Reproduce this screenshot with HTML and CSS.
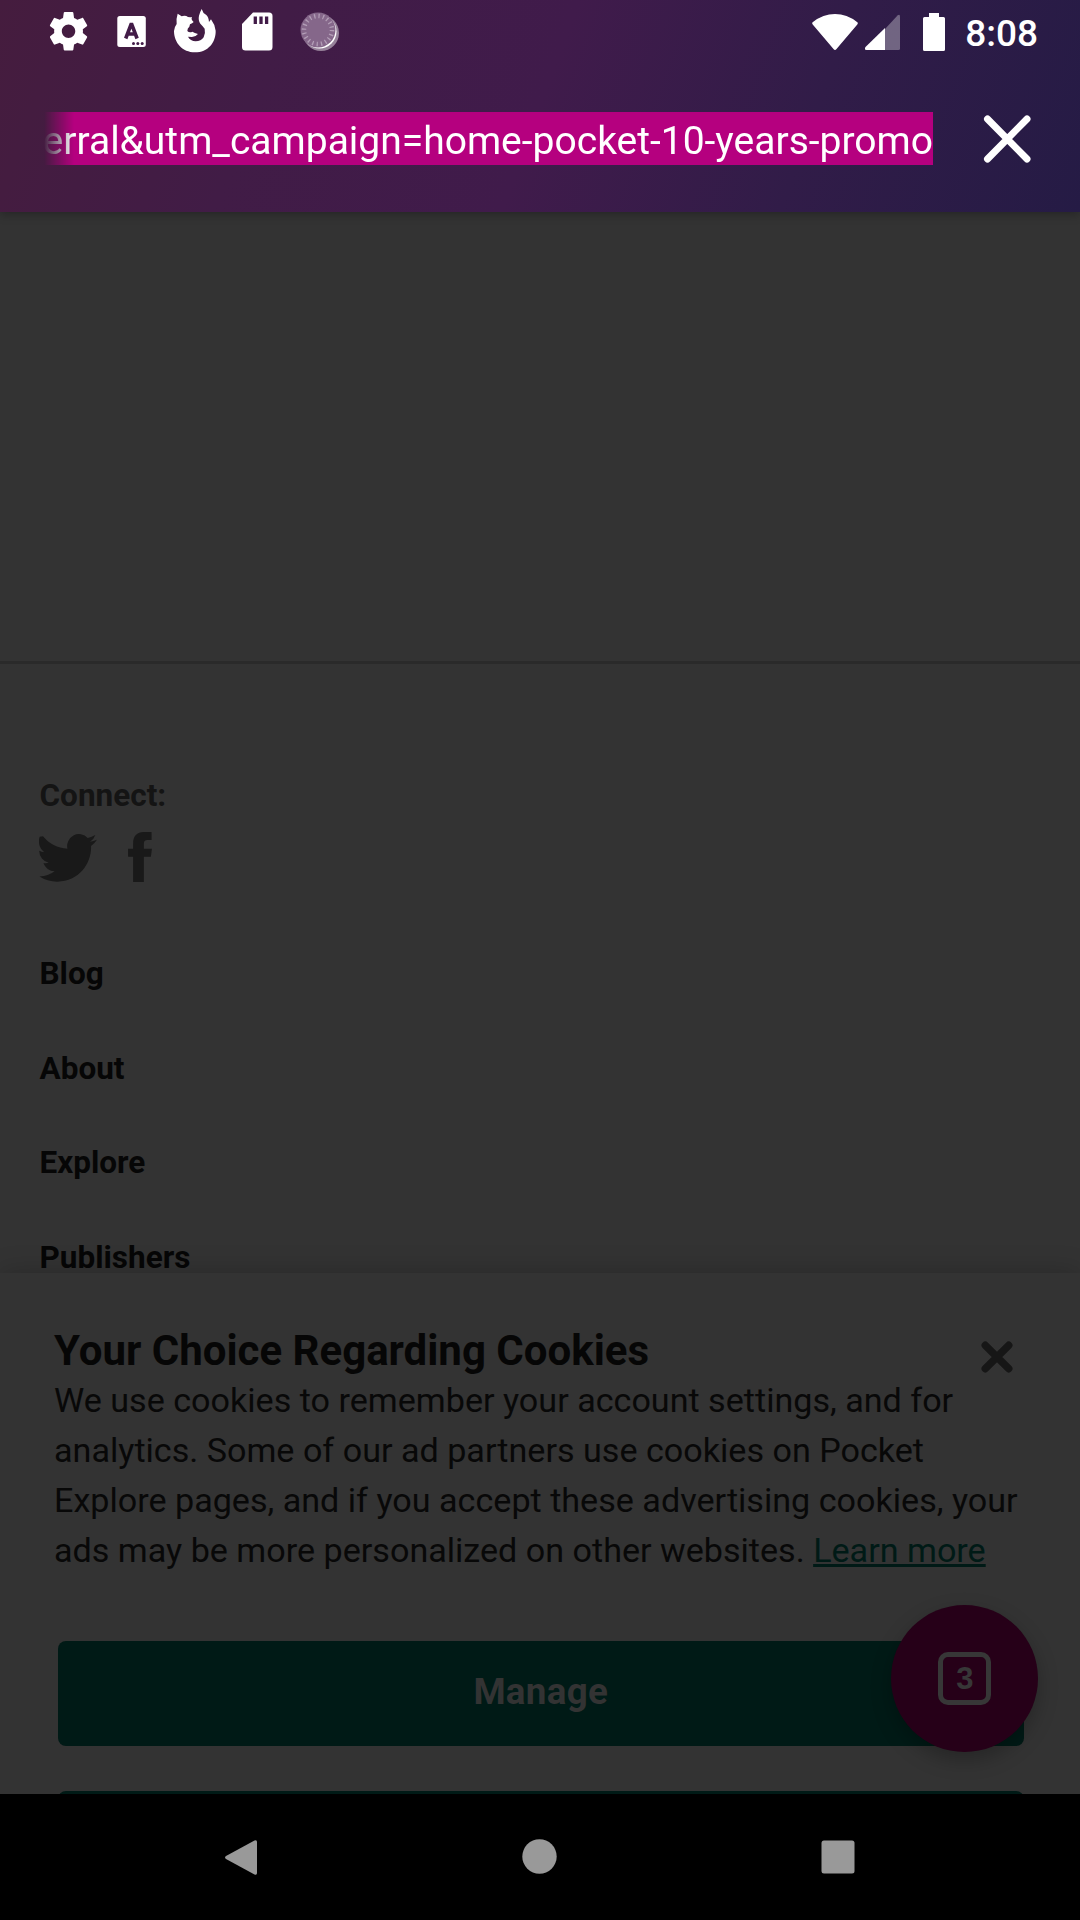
FILE: index.html
```html
<!DOCTYPE html>
<html lang="en">
<head>
<meta charset="utf-8">
<title>Pocket</title>
<link rel="stylesheet" href="styles.css">
</head>
<body>
<div class="screen">
  <header class="toolbar">
    <div class="status">
      <div class="notifications">
        <svg class="slot" viewBox="0 0 63 63"><path transform="translate(8.5 8.2) scale(1.92)" fill="#fff" d="M19.43 12.98c.04-.32.07-.64.07-.98s-.03-.66-.07-.98l2.11-1.65c.19-.15.24-.42.12-.64l-2-3.46c-.12-.22-.39-.3-.61-.22l-2.49 1c-.52-.4-1.08-.73-1.69-.98l-.38-2.65C14.46 2.18 14.25 2 14 2h-4c-.25 0-.46.18-.49.42l-.38 2.65c-.61.25-1.17.59-1.69.98l-2.49-1c-.23-.09-.49 0-.61.22l-2 3.46c-.13.22-.07.49.12.64l2.11 1.65c-.04.32-.07.65-.07.98s.03.66.07.98l-2.11 1.65c-.19.15-.24.42-.12.64l2 3.46c.12.22.39.3.61.22l2.49-1c.52.4 1.08.73 1.69.98l.38 2.65c.03.24.24.42.49.42h4c.25 0 .46-.18.49-.42l.38-2.65c.61-.25 1.17-.59 1.69-.98l2.49 1c.23.09.49 0 .61-.22l2-3.46c.12-.22.07-.49-.12-.64l-2.11-1.65zM12 15.5c-1.93 0-3.5-1.57-3.5-3.5s1.57-3.5 3.5-3.5 3.5 1.57 3.5 3.5-1.57 3.5-3.5 3.5z"/></svg>
        <svg class="slot" viewBox="100 0 63 63"><rect x="117.300" y="16" width="28.500" height="31" rx="2.500" fill="#fff"/><path fill="none" stroke="#421b47" stroke-width="3.600" d="M125.700 38.500L131 24.500h.8l5.300 14M127.500 34h8"/><g fill="#421b47"><circle cx="133.500" cy="43.500" r="1.500"/><circle cx="137.800" cy="43.500" r="1.500"/><circle cx="142.200" cy="43.500" r="1.500"/></g></svg>
        <svg class="slot" viewBox="163 0 63 63"><path transform="translate(30 0) scale(.33333)" fill="#fff" d="M443 41L455 49Q461 46 469 48Q475 53 486 51Q482 59 491 66Q487 70 480 73L478 80Q472 84 472 93Q478 99 487 95Q494 99 504 102Q498 110 486 111L474 110Q481 123 497 124Q513 124 521 112Q527 100 524 86Q518 78 511 71Q504 61 507 47Q510 36 515 27Q518 39 529 45Q536 51 537 66L543 58Q555 74 557 92C558 127 534 157 495 157C457 157 432 128 432 93Q433 81 440 72Q438 56 443 41Z"/></svg>
        <svg class="slot" viewBox="226 0 63 63"><path fill="#fff" d="M253 12.500h16a3.500 3.500 0 0 1 3.500 3.500v31a3.500 3.500 0 0 1-3.500 3.500h-23.500a3.500 3.500 0 0 1-3.500-3.500V24z"/><path stroke="#411b48" stroke-width="3.300" d="M255.300 16.500v7.500M261 16.500v7.500M266.600 16.500v7.500"/></svg>
        <svg class="slot" viewBox="289 0 63 63"><circle cx="321" cy="33" r="18" fill="#fff" opacity=".45"/><circle cx="319.500" cy="31.500" r="17" fill="#fff"/><circle cx="318" cy="30" r="17.500" fill="#85678a"/><circle cx="318" cy="30" r="14" fill="none" stroke="#b29db6" stroke-width="4.500" stroke-dasharray="1.300 3.100"/></svg>
      </div>
      <div class="system">
        <svg class="wifi" viewBox="812 13 46 36"><path fill="#fff" d="M813 21Q823 13 835 13T857 21q1.500 1 .3 2.500L836.500 48q-1.500 1.800-3 0L812.700 23.500q-1.200-1.500.3-2.500z"/></svg>
        <svg class="signal" viewBox="865 14 35 36"><path fill="#fff" opacity=".32" d="M885 29L897.500 15.500q2.500-2 2.500 1V48.500q0 1.500-1.500 1.500H885z"/><path fill="#fff" d="M885 28v22h-18.500q-3-.5-1-3z"/></svg>
        <svg class="battery" viewBox="923 12 22 38"><path fill="#fff" d="M929 12h10v4h4.500q1.500 0 1.500 1.500v31q0 1.500-1.500 1.500h-19q-1.500 0-1.500-1.500v-31q0-1.500 1.500-1.500h4.500z"/></svg>
        <span class="clock">8:08</span>
      </div>
    </div>
    <div class="address">
      <div class="url"><span class="url-text">erral&amp;utm_campaign=home-pocket-10-years-promo</span></div>
      <svg class="clear" viewBox="0 0 48 48"><path stroke="#fff" stroke-width="7" stroke-linecap="round" d="M4.500 4L44 44M44 4L4.500 44"/></svg>
    </div>
  </header>

  <main class="page">
    <div class="blank"></div>
    <footer class="footer">
      <h2 class="connect">Connect:</h2>
      <div class="social">
        <svg class="twitter" viewBox="0 2.2 24 19.700" preserveAspectRatio="none"><path fill="#191919" d="M23.953 4.570a10 10 0 01-2.825.775 4.958 4.958 0 002.163-2.723c-.951.555-2.005.959-3.127 1.184a4.920 4.920 0 00-8.384 4.482C7.690 8.095 4.067 6.130 1.640 3.162L.3 3.300a4.822 4.822 0 00-.3 2.337c0 1.710 1.100 3.213 2.188 4.096A4.904 4.904 0 01.1 9.117v.06a4.923 4.923 0 003.946 4.827 4.996 4.996 0 01-2.212.085 4.936 4.936 0 004.604 3.417 9.867 9.867 0 01-6.102 2.105L0 19.544a13.995 13.995 0 007.557 2.209c9.053 0 13.998-7.496 13.998-13.985 0-.210 0-.420-.015-.630A9.935 9.935 0 0024 4.590z"/></svg>
        <svg class="facebook" viewBox="386 576 71 149"><path fill="#191919" d="M401 725V650H386V626H401V610C401 588 412 576 433 576H456V600H444C436 600 433 603 433 612V626H457L454 650H433V725Z"/></svg>
      </div>
      <nav class="links">
        <a>Blog</a>
        <a>About</a>
        <a>Explore</a>
        <a>Publishers</a>
      </nav>
    </footer>

    <section class="cookies">
      <div class="cookies-head">
        <h1 class="cookies-title">Your Choice Regarding Cookies</h1>
        <svg class="dismiss" viewBox="0 0 32 32"><path stroke="#161616" stroke-width="7.500" stroke-linecap="round" d="M4.300 4.300L27.700 27.700M27.700 4.300L4.300 27.700"/></svg>
      </div>
      <p class="cookies-text">We use cookies to remember your account settings, and for<br>analytics. Some of our ad partners use cookies on Pocket<br>Explore pages, and if you accept these advertising cookies, your<br>ads may be more personalized on other websites. <a class="learn">Learn more</a></p>
      <div class="actions">
        <div class="button">Manage</div>
        <div class="button outline"></div>
      </div>
    </section>

    <div class="fab"><span class="tabs">3</span></div>
  </main>

  <nav class="navbar">
    <svg class="nav-icon" viewBox="0 0 36 36"><path fill="#999" d="M2 17L30.500 1.500q2.500-1 2.500 1.500v31q0 2.500-2.500 1.500L2 20q-2-1.500 0-3z"/></svg>
    <svg class="nav-icon" viewBox="0 0 36 36"><circle cx="17.500" cy="17.500" r="17.200" fill="#999"/></svg>
    <svg class="nav-icon" viewBox="0 0 36 36"><rect x="1.500" y="1.500" width="33" height="33" rx="2.500" fill="#999"/></svg>
  </nav>
</div>
</body>
</html>
```
FILE: styles.css
```css
* {
  box-sizing: border-box;
}

body {
  margin: 0;
  background: #000;
  font-family: Roboto, sans-serif;
}

svg {
  display: block;
  flex: none;
}

.screen {
  display: flex;
  flex-direction: column;
  width: 1080px;
  height: 1920px;
  overflow: hidden;
}

/* Private-mode toolbar */
.toolbar {
  position: relative;
  z-index: 1;
  flex: none;
  height: 212px;
  background: linear-gradient(110deg, #451c3e 0%, #411c46 25%, #401b4b 50%, #311c48 74%, #251b45 100%);
  box-shadow: 0 2px 10px rgba(0, 0, 0, 0.3);
}

.status {
  display: flex;
  justify-content: space-between;
  height: 63px;
  padding: 0 42px 0 37px;
}

.notifications {
  display: flex;
}

.slot {
  width: 63px;
  height: 63px;
}

.system {
  display: flex;
  align-items: center;
}

.wifi {
  width: 46px;
  height: 36px;
  margin-right: 7px;
}

.signal {
  width: 35px;
  height: 36px;
  margin-right: 23px;
}

.battery {
  width: 22px;
  height: 38px;
  margin-right: 20px;
}

.clock {
  color: #fff;
  font-size: 37px;
  font-weight: 500;
  line-height: 43px;
  padding-top: 3px;
}

.address {
  display: flex;
  align-items: center;
  justify-content: space-between;
  height: 151px;
  padding: 0 49.5px 0 44px;
}

.url {
  display: flex;
  width: 889px;
  height: 53px;
  justify-content: flex-end;
  background: #b5007f;
  -webkit-mask-image: linear-gradient(90deg, transparent 0, #000 30px);
  mask-image: linear-gradient(90deg, transparent 0, #000 30px);
}

.url-text {
  color: #fff;
  font-size: 39px;
  line-height: 53px;
  padding-top: 3px;
  white-space: nowrap;
}

.clear {
  width: 48px;
  height: 48px;
}

/* Dimmed page */
.page {
  position: relative;
  flex: 1;
  overflow: hidden;
  background: #333;
}

.blank {
  height: 452px;
  border-bottom: 3px solid #2a2a2a;
}

.footer {
  padding: 114px 39.5px 0;
}

.connect {
  margin: 0;
  color: #141414;
  font-size: 31.5px;
  font-weight: 700;
  line-height: 36px;
}

.social {
  display: flex;
  align-items: flex-end;
  gap: 31px;
  height: 51px;
  margin: 17px 0 74px -0.5px;
}

.twitter {
  width: 58px;
  height: 48px;
}

.facebook {
  width: 24px;
  height: 50px;
}

.links {
  display: flex;
  flex-direction: column;
  gap: 58.5px;
}

.links a {
  color: #060606;
  font-size: 31.5px;
  font-weight: 700;
  line-height: 36px;
}

/* Cookie notice over the page */
.cookies {
  position: absolute;
  left: 0;
  right: 0;
  bottom: 0;
  height: 521px;
  padding: 52.5px 54px 0;
  background: #333;
  box-shadow: 0 0 26px rgba(0, 0, 0, 0.22);
}

.cookies-head {
  display: flex;
  justify-content: space-between;
  height: 49px;
  padding-right: 12.7px;
}

.cookies-title {
  margin: 0;
  color: #060606;
  font-size: 42px;
  font-weight: 700;
  line-height: 50px;
}

.dismiss {
  width: 32px;
  height: 32px;
  margin-top: 15.7px;
}

.cookies-text {
  margin: 0 0 66px;
  color: #080808;
  font-size: 34.125px;
  line-height: 50px;
  white-space: nowrap;
}

.learn {
  color: #001a16;
  text-decoration: underline;
  text-decoration-thickness: 2.6px;
}

.actions {
  display: flex;
  flex-direction: column;
  gap: 45px;
  padding: 0 2px 0 3.5px;
}

.button {
  flex: none;
  height: 105px;
  border-radius: 8px;
  background: #001a16;
  color: #333;
  font-size: 36.75px;
  font-weight: 700;
  letter-spacing: 0.3px;
  line-height: 101px;
  text-align: center;
}

.outline {
  border: 3px solid #001a16;
  background: transparent;
}

.fab {
  position: absolute;
  right: 41.7px;
  bottom: 42px;
  display: flex;
  align-items: center;
  justify-content: center;
  width: 147px;
  height: 147px;
  border-radius: 50%;
  background: #260018;
  box-shadow: 0 8px 20px rgba(0, 0, 0, 0.26);
}

.tabs {
  width: 53px;
  height: 53px;
  border: 5.5px solid #373737;
  border-radius: 10px;
  color: #373737;
  font-family: "Liberation Sans", sans-serif;
  font-size: 31px;
  font-weight: 700;
  line-height: 43px;
  text-align: center;
}

/* System navigation */
.navbar {
  display: flex;
  flex: none;
  align-items: center;
  justify-content: space-between;
  height: 126px;
  padding: 0 224px;
  background: #000;
}

.nav-icon {
  width: 36px;
  height: 36px;
}
```
